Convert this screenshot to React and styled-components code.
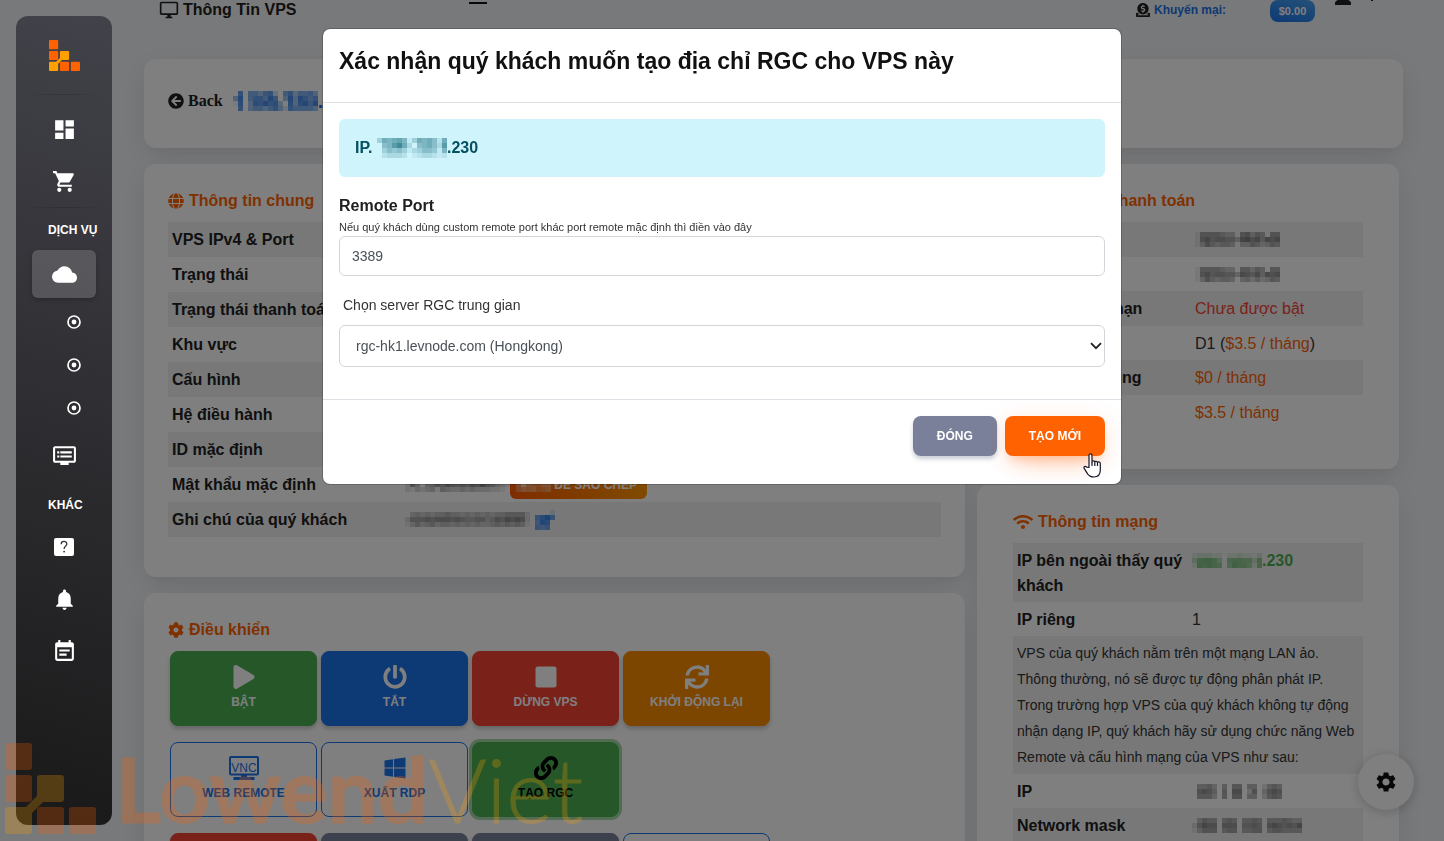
import React from "react";
import styled, { createGlobalStyle, css } from "styled-components";
import {
  MdDashboard,
  MdShoppingCart,
  MdCloud,
  MdDvr,
  MdNotifications,
  MdEventNote,
  MdOutlineDesktopWindows,
  MdPerson,
  MdSettings,
} from "react-icons/md";
import {
  FaArrowCircleLeft,
  FaGlobe,
  FaCog,
  FaWifi,
  FaPlay,
  FaPowerOff,
  FaStop,
  FaSync,
  FaWindows,
  FaLink,
  FaDonate,
  FaCreditCard,
} from "react-icons/fa";

const GlobalStyle = createGlobalStyle`
  *, *::before, *::after { box-sizing: border-box; }
  body {
    margin: 0;
    background: #f0f2f5;
    color: #212121;
    font-family: "Liberation Sans", Arial, sans-serif;
    font-size: 16px;
    line-height: 24px;
    overflow: hidden;
  }
  button, input, select { font-family: inherit; }
  a { color: inherit; text-decoration: none; }
  svg { display: block; flex: none; }
  h1, h2 { margin: 0; }
`;

/* ---------- page frame ---------- */

const Page = styled.div`
  display: grid;
  grid-template-columns: 144px minmax(0, 1fr);
  height: 100vh;
  overflow: hidden;
`;

const Main = styled.main`
  padding-right: 41px;
`;

/* ---------- sidebar ---------- */

const Sidebar = styled.nav`
  position: relative;
  z-index: 20;
  width: 96px;
  height: calc(100vh - 32px);
  margin: 16px 0 0 16px;
  padding-top: 24px;
  border-radius: 12px;
  background: linear-gradient(195deg, #42424a, #191919);
  color: #fff;
  display: flex;
  flex-direction: column;
  align-items: center;
`;

const Brand = styled.a`
  display: block;
  height: 54px;
`;

const Rule = styled.hr`
  width: 80px;
  height: 1px;
  margin: 0;
  border: 0;
  flex: none;
  background: linear-gradient(90deg, transparent, rgba(0, 0, 0, 0.18), transparent);
`;

const NavLink = styled.a`
  display: flex;
  align-items: center;
  justify-content: center;
  width: 64px;
  height: 48px;
  margin: 2px 0;
  border-radius: 6px;
  flex: none;
  ${(p) =>
    p.$active &&
    css`
      background: rgba(255, 255, 255, 0.17);
      box-shadow: 0 2px 4px rgba(0, 0, 0, 0.2);
    `}
`;

const NavGroup = styled.div`
  display: flex;
  flex-direction: column;
  padding: ${(p) => p.$pad || "0"};
`;

const SubLink = styled.a`
  display: flex;
  align-items: center;
  justify-content: flex-end;
  width: 64px;
  height: 43px;
  padding-right: 15px;
`;

const NavHeading = styled.div`
  width: 64px;
  padding-left: 16px;
  font-size: 12px;
  font-weight: 700;
  line-height: 20px;
  white-space: nowrap;
`;

/* ---------- top bar ---------- */

const TopBar = styled.header`
  display: flex;
  align-items: flex-start;
  height: 59px;
  padding: 0 30px 0 15px;
  line-height: 20px;
`;

const PageTitle = styled.h1`
  display: flex;
  gap: 4px;
  font-size: 16px;
  font-weight: 700;
  line-height: 20px;
`;

const Clip = styled.div`
  display: flex;
  align-items: flex-end;
  height: ${(p) => p.$h}px;
  overflow: hidden;
`;

const MenuToggle = styled.button`
  width: 18px;
  height: 4px;
  margin-left: 173px;
  padding: 0;
  border: 0;
  border-bottom: 2px solid #111;
  background: none;
`;

const Account = styled.div`
  display: flex;
  align-items: flex-start;
  margin-left: auto;
`;

const Promo = styled.a`
  display: flex;
  align-items: center;
  gap: 4px;
  margin-right: 44px;
  font-size: 12px;
  font-weight: 700;
  color: #1a73e8;
  svg { color: #212121; }
`;

const Balance = styled.span`
  width: 45px;
  margin-right: 16px;
  border-radius: 8px;
  background: linear-gradient(195deg, #49a3f1, #1a73e8);
  color: #fff;
  font-size: 11px;
  font-weight: 700;
  line-height: 22px;
  text-align: center;
`;

const Tick = styled.span`
  width: 2px;
  height: 1px;
  margin-left: 16px;
  background: #212121;
`;

/* ---------- cards ---------- */

const Card = styled.section`
  border-radius: 12px;
  background: #fff;
  box-shadow: 0 8px 26px -4px rgba(20, 20, 20, 0.12), 0 8px 9px -5px rgba(20, 20, 20, 0.03);
  padding: ${(p) => p.$pad};
`;

const Columns = styled.div`
  display: grid;
  grid-template-columns: minmax(0, 821fr) minmax(0, 422fr);
  gap: 12px;
  align-items: start;
  margin: 16px 4px 0 0;
`;

const Stack = styled.div`
  display: grid;
  gap: 16px;
`;

const BackRow = styled.div`
  display: flex;
  align-items: center;
  height: 36px;
`;

const BackLink = styled.a`
  display: flex;
  align-items: center;
  gap: 4px;
  margin-right: 10px;
  font-family: "Liberation Serif", serif;
  font-weight: 700;
`;

const HostName = styled.span`
  display: flex;
  align-items: center;
  color: #1a73e8;
  font-size: 20px;
  font-weight: 700;
  line-height: 20px;
`;

const CardTitle = styled.h2`
  display: flex;
  align-items: center;
  gap: 5px;
  height: 26px;
  margin-bottom: 8px;
  color: #ff6200;
  font-size: 16px;
  font-weight: 700;
`;

const InfoTable = styled.table`
  width: 100%;
  border-collapse: collapse;
  line-height: 25px;
  th, td {
    height: 35px;
    padding: 5px 4px 4px;
    text-align: left;
    vertical-align: top;
  }
  th { width: ${(p) => p.$label}px; font-weight: 700; }
  td { font-weight: 400; color: #333; }
  tr:nth-child(odd) { background: #f0f0f0; }
  ${(p) =>
    p.$tight &&
    css`
      tr:nth-child(even) th, tr:nth-child(even) td { height: 34px; }
    `}
`;

const Note = styled.td`
  && {
    padding: 4px;
    font-size: 14px;
    line-height: 26px;
  }
`;

const Tone = styled.span`
  color: ${(p) => p.$c};
  font-weight: ${(p) => (p.$bold ? 700 : 400)};
`;

const Inline = styled.div`
  display: flex;
  align-items: center;
  gap: ${(p) => p.$gap || 0}px;
  height: 25px;
`;

const CopyButton = styled.button`
  display: flex;
  align-items: center;
  justify-content: flex-end;
  gap: 3px;
  height: 28px;
  width: 137px;
  padding: 0 10px 0 0;
  border: 0;
  border-radius: 6px;
  background: linear-gradient(80deg, #ff5a00, #ff9800);
  color: #fff;
  font-size: 12px;
  font-weight: 700;
  text-transform: uppercase;
`;

/* ---------- control buttons ---------- */

const Controls = styled.div`
  display: grid;
  grid-template-columns: repeat(4, 147px);
  gap: 16px 4px;
  padding-left: 2px;
`;

const tones = {
  green: css`background: #4caf50; border-color: #4caf50; color: #fff;`,
  blue: css`background: #1a73e8; border-color: #1a73e8; color: #fff;`,
  red: css`background: #f44335; border-color: #f44335; color: #fff;`,
  amber: css`background: #fb8c00; border-color: #fb8c00; color: #fff;`,
  slate: css`background: #7b809a; border-color: #7b809a; color: #fff;`,
  outline: css`background: transparent; border-color: #1a73e8; color: #1a73e8; box-shadow: none;`,
  focus: css`
    background: #4caf50;
    border-color: #4caf50;
    color: #000;
    box-shadow: 0 0 0 3px rgba(76, 175, 80, 0.5);
  `,
};

const ControlButton = styled.button`
  display: flex;
  flex-direction: column;
  align-items: center;
  justify-content: center;
  gap: 4px;
  height: 75px;
  padding: 0 0 2px;
  border: 1px solid;
  border-radius: 8px;
  font-size: 12px;
  font-weight: 700;
  line-height: 18px;
  text-transform: uppercase;
  box-shadow: 0 3px 4px rgba(0, 0, 0, 0.2);
  ${(p) => tones[p.$tone]}
`;

const SettingsButton = styled.button`
  position: fixed;
  right: 30px;
  bottom: 31px;
  display: flex;
  align-items: center;
  justify-content: center;
  width: 56px;
  height: 56px;
  padding: 0;
  border: 0;
  border-radius: 50%;
  background: #fff;
  color: #111;
  box-shadow: 0 2px 12px rgba(0, 0, 0, 0.2);
`;

/* ---------- modal ---------- */

const Backdrop = styled.div`
  position: fixed;
  inset: 0;
  z-index: 10;
  display: flex;
  align-items: flex-start;
  justify-content: center;
  padding-top: 28px;
  background: rgba(0, 0, 0, 0.5);
`;

const Dialog = styled.div`
  position: relative;
  width: 800px;
  max-width: 100%;
  border: 1px solid rgba(0, 0, 0, 0.2);
  border-radius: 8px;
  background: #fff;
  background-clip: padding-box;
`;

const DialogHeader = styled.div`
  padding: 16px 16px 24px;
  border-bottom: 1px solid #dee2e6;
`;

const DialogTitle = styled.h2`
  color: #111;
  font-size: 23px;
  font-weight: 700;
  line-height: 33px;
`;

const DialogBody = styled.div`
  display: flex;
  flex-direction: column;
  padding: 16px 16px 32px;
`;

const Alert = styled.div`
  display: flex;
  align-items: center;
  height: 58px;
  margin-bottom: 16px;
  padding: 0 16px;
  border-radius: 6px;
  background: #cff4fc;
  color: #055160;
  font-weight: 700;
`;

const FieldLabel = styled.label`
  font-weight: 700;
  line-height: 26px;
`;

const Hint = styled.span`
  color: #333;
  font-size: 11px;
  line-height: 16px;
  margin-bottom: 1px;
`;

const SmallLabel = styled.label`
  margin: 16px 0 6px 4px;
  color: #333;
  font-size: 14px;
  line-height: 27px;
`;

const field = css`
  width: 100%;
  border: 1px solid #d2d6da;
  border-radius: 6px;
  background: #fff;
  color: #495057;
  font-size: 14px;
`;

const TextInput = styled.input`
  ${field}
  height: 40px;
  padding: 0 12px;
`;

const SelectWrap = styled.div`
  display: grid;
  align-items: center;
  > * { grid-area: 1 / 1; }
  svg { justify-self: end; margin-right: 3px; pointer-events: none; }
`;

const Select = styled.select`
  ${field}
  height: 42px;
  padding: 0 16px;
  appearance: none;
`;

const DialogFooter = styled.div`
  display: flex;
  justify-content: flex-end;
  gap: 8px;
  padding: 16px 16px 28px;
  border-top: 1px solid #dee2e6;
`;

const ActionButton = styled.button`
  height: 40px;
  padding: 0 24px;
  border: 0;
  border-radius: 8px;
  color: #fff;
  font-size: 12px;
  font-weight: 700;
  text-transform: uppercase;
  background: ${(p) => (p.$primary ? "#ff6200" : "#7b809a")};
  box-shadow: ${(p) =>
    p.$primary
      ? "0 14px 26px -12px rgba(255, 98, 0, 0.4), 0 4px 23px rgba(255, 98, 0, 0.15), 0 8px 10px -5px rgba(255, 98, 0, 0.2)"
      : "0 3px 4px rgba(123, 128, 154, 0.4)"};
`;

const Pointer = styled.svg`
  position: absolute;
  right: 19px;
  bottom: 6px;
`;

/* ---------- watermark ---------- */

const Watermark = styled.div`
  position: fixed;
  left: 5px;
  bottom: 7px;
  z-index: 30;
  display: flex;
  align-items: flex-end;
  gap: 19px;
  opacity: 0.25;
  pointer-events: none;
`;

const Wordmark = styled.span`
  display: flex;
  height: 90px;
  color: #ff6200;
  font-family: Lato, sans-serif;
  font-size: 89px;
  font-weight: 700;
  line-height: 89px;
  -webkit-text-stroke: 1px currentColor;
  span { color: #ffa000; font-weight: 300; }
`;

/* ---------- drawings ---------- */

function Logo({ size }) {
  const sq = (x, y, c) => <rect x={x} y={y} width="27" height="27" rx="3" fill={c} />;
  return (
    <svg width={size} height={size} viewBox="0 0 91 91">
      {sq(0, 0, "#ff6200")}
      {sq(0, 32, "#ff6200")}
      {sq(32, 64, "#ff6200")}
      {sq(64, 64, "#ff6200")}
      <path
        d="M35 32h21q3 0 3 3v21q0 3-3 3H38L27 70v18q0 3-3 3H3q-3 0-3-3V67q0-3 3-3h18L32 53V35q0-3 3-3z"
        fill="#ffa000"
      />
    </svg>
  );
}

function Ring() {
  return (
    <svg width="14" height="14" viewBox="0 0 14 14">
      <circle cx="7" cy="7" r="6" fill="none" stroke="#fff" strokeWidth="1.7" />
      <circle cx="7" cy="7" r="2.4" fill="#fff" />
    </svg>
  );
}

function HelpBox() {
  return (
    <svg width="20" height="18" viewBox="0 0 20 18">
      <rect width="20" height="18" rx="2" fill="#fff" />
      <path d="M7.2 6.2C7.2 2.6 12.8 2.6 12.8 6c0 2-2.7 2.4-2.7 4.9" fill="none" stroke="#333" strokeWidth="1.3" />
      <rect x="9.3" y="12.8" width="1.6" height="1.6" fill="#333" />
    </svg>
  );
}

function VncIcon() {
  return (
    <svg width="30" height="24" viewBox="0 0 30 24" fill="none" stroke="currentColor">
      <rect x="1" y="1" width="28" height="17.500" rx="1" strokeWidth="2" />
      <path d="M12 20h6" strokeWidth="2" />
      <path d="M4.500 22.5h21" strokeWidth="3" />
      <text x="15" y="16" textAnchor="middle" fontSize="12" fill="currentColor" stroke="none" fontWeight="400">
        VNC
      </text>
    </svg>
  );
}

function Caret() {
  return (
    <svg width="12" height="8" viewBox="0 0 12 8">
      <path d="M1 1.2l5 5 5-5" fill="none" stroke="#222" strokeWidth="1.8" />
    </svg>
  );
}

function Hand() {
  return (
    <Pointer width="19" height="25" viewBox="0 0 19 25">
      <path
        d="M6 14.5V2.6C6 .4 9 .4 9 2.6V9c0-1.6 2.8-1.5 2.8.3 0-1.5 2.7-1.3 2.7.5 0-1.4 2.8-1.2 2.8.8V17c0 4.2-2 7-6.500 7-4.200 0-5.400-1.600-7-4.400L1.200 15.400c-1-1.700 1-2.800 2.400-1.300z"
        fill="#fff"
        stroke="#15152a"
        strokeWidth="1.2"
        strokeLinejoin="round"
      />
      <path d="M9 9v4M11.8 9.5V13M14.5 10v3" stroke="#15152a" strokeWidth="1.2" />
    </Pointer>
  );
}

/* Censored text: a mosaic of 5px cells, one hex digit of opacity per cell. */
function Mosaic({ rows, color = "#333" }) {
  const width = rows[0].length * 5;
  const height = rows.length * 5;
  return (
    <svg width={width} height={height} viewBox={`0 0 ${width} ${height}`} shapeRendering="crispEdges" aria-hidden="true">
      {rows.flatMap((row, y) =>
        [...row].map((v, x) => (
          <rect key={`${x}-${y}`} x={x * 5} y={y * 5} width="5" height="5" fill={color} opacity={parseInt(v, 16) / 15} />
        ))
      )}
    </svg>
  );
}

const mosaics = {
  host: ["0a08869a308a58896", "6c08aa8c906c6ca8a", "1b06bacab50b6bc9c", "0a068868a62a88886"],
  alert: ["48789714878628", "067ac83067863a", "04656413466517", "02333201233212"],
  start: ["16666544067465066", "17867766489785878", "14754554044653465"],
  renew: ["16666544066465066", "17867766487685878", "14754554045353465"],
  password: ["263164764646355743211", "274045768767687976431", "213234154334343332210"],
  note: ["0343434454434343434455552", "2666767776765566457687872", "1353453443434343345454541"],
  edit: ["0002", "9bd9", "8cb0", "9890"],
  copy: ["3546354", "5b65466", "4656345"],
  publicIp: ["23332202232213", "59aa9608998849", "2a9a9807a99729"],
  lanIp: ["055640506605502565", "078750608803704787", "066640607705503676"],
  mask: ["0465505650556505556544", "2687707770667607876768", "1466605660556605665555"],
};

/* ---------- page data ---------- */

const generalRows = [
  ["VPS IPv4 & Port", ""],
  ["Trạng thái", ""],
  ["Trạng thái thanh toán", ""],
  ["Khu vực", ""],
  ["Cấu hình", ""],
  ["Hệ điều hành", ""],
  ["ID mặc định", ""],
  [
    "Mật khẩu mặc định",
    <Inline key="p">
      <Mosaic rows={mosaics.password} />
      <CopyButton>
        <Mosaic rows={mosaics.copy} color="#fff" />
        Để sao chép
      </CopyButton>
    </Inline>,
  ],
  [
    "Ghi chú của quý khách",
    <Inline key="n" $gap={5}>
      <Mosaic rows={mosaics.note} />
      <Mosaic rows={mosaics.edit} color="#1a73e8" />
    </Inline>,
  ],
];

const orange = "#ff6200";

const billingRows = [
  ["Ngày tạo", <Inline key="a"><Mosaic rows={mosaics.start} /></Inline>],
  ["Ngày hết hạn", <Inline key="b"><Mosaic rows={mosaics.renew} /></Inline>],
  ["Tự động gia hạn", <Tone key="c" $c="#f44335">Chưa được bật</Tone>],
  ["Gói VPS", <span key="d">D1 (<Tone $c={orange}>$3.5 / tháng</Tone>)</span>],
  ["Dịch vụ bổ sung", <Tone key="e" $c={orange}>$0 / tháng</Tone>],
  ["Tổng cộng", <Tone key="f" $c={orange}>$3.5 / tháng</Tone>],
];

const controls = [
  ["Bật", "green", <FaPlay size={24} />],
  ["Tắt", "blue", <FaPowerOff size={24} />],
  ["Dừng VPS", "red", <FaStop size={24} />],
  ["Khởi động lại", "amber", <FaSync size={24} />],
  ["Web Remote", "outline", <VncIcon />],
  ["Xuất RDP", "outline", <FaWindows size={24} />],
  ["Tạo RGC", "focus", <FaLink size={24} />],
];

const moreControls = [
  ["Hủy VPS", "red"],
  ["Cài lại", "slate"],
  ["Nâng cấp", "slate"],
  ["Gia hạn", "outline"],
];

function Rows({ rows }) {
  return rows.map(([label, value]) => (
    <tr key={label}>
      <th scope="row">{label}</th>
      <td>{value}</td>
    </tr>
  ));
}

export default function App() {
  return (
    <>
      <GlobalStyle />
      <Page>
        <Sidebar>
          <Brand href="#" aria-label="LowendViet">
            <Logo size={31} />
          </Brand>
          <Rule />
          <NavGroup $pad="8px 0 0">
            <NavLink href="#" aria-label="Dashboard"><MdDashboard size={25} /></NavLink>
            <NavLink href="#" aria-label="Cart"><MdShoppingCart size={25} /></NavLink>
          </NavGroup>
          <Rule />
          <NavGroup $pad="12px 0 8px"><NavHeading>DỊCH VỤ</NavHeading></NavGroup>
          <NavLink href="#" aria-label="Cloud" $active><MdCloud size={25} /></NavLink>
          <SubLink href="#" aria-label="VPS"><Ring /></SubLink>
          <SubLink href="#" aria-label="Hosting"><Ring /></SubLink>
          <SubLink href="#" aria-label="Proxy"><Ring /></SubLink>
          <NavLink href="#" aria-label="Servers"><MdDvr size={25} /></NavLink>
          <NavGroup $pad="14px 0 6px"><NavHeading>KHÁC</NavHeading></NavGroup>
          <NavLink href="#" aria-label="Help"><HelpBox /></NavLink>
          <NavLink href="#" aria-label="Notifications"><MdNotifications size={25} /></NavLink>
          <NavLink href="#" aria-label="Events"><MdEventNote size={25} /></NavLink>
        </Sidebar>

        <Main>
          <TopBar>
            <PageTitle>
              <MdOutlineDesktopWindows size={20} />
              Thông Tin VPS
            </PageTitle>
            <MenuToggle aria-label="Menu" />
            <Account>
              <Promo href="#">
                <FaDonate size={14} />
                Khuyến mại:
              </Promo>
              <Balance>$0.00</Balance>
              <Clip $h={9}><MdPerson size={24} /></Clip>
              <Tick />
            </Account>
          </TopBar>

          <Card $pad="24px 24px 29px">
            <BackRow>
              <BackLink href="#">
                <FaArrowCircleLeft size={16} />
                Back
              </BackLink>
              <HostName>
                <Mosaic rows={mosaics.host} color="#1a73e8" />.1.230
              </HostName>
            </BackRow>
          </Card>

          <Columns>
            <Stack>
              <Card $pad="24px 24px 40px">
                <CardTitle><FaGlobe size={16} />Thông tin chung</CardTitle>
                <InfoTable $label={233}>
                  <tbody><Rows rows={generalRows} /></tbody>
                </InfoTable>
              </Card>
              <Card $pad="24px">
                <CardTitle><FaCog size={16} />Điều khiển</CardTitle>
                <Controls>
                  {controls.map(([label, tone, icon]) => (
                    <ControlButton key={label} $tone={tone}>{icon}{label}</ControlButton>
                  ))}
                  <span />
                  {moreControls.map(([label, tone]) => (
                    <ControlButton key={label} $tone={tone} aria-label={label} />
                  ))}
                </Controls>
              </Card>
            </Stack>

            <Stack>
              <Card $pad="24px 36px 40px">
                <CardTitle><FaCreditCard size={18} />Thông tin thanh toán</CardTitle>
                <InfoTable $label={178} $tight>
                  <tbody><Rows rows={billingRows} /></tbody>
                </InfoTable>
              </Card>
              <Card $pad="24px 36px">
                <CardTitle><FaWifi size={20} />Thông tin mạng</CardTitle>
                <InfoTable $label={175} $tight>
                  <tbody>
                    <tr>
                      <th scope="row">IP bên ngoài thấy quý khách</th>
                      <td>
                        <Inline>
                          <Mosaic rows={mosaics.publicIp} color="#4caf50" />
                          <Tone $c="#4caf50" $bold>.230</Tone>
                        </Inline>
                      </td>
                    </tr>
                    <tr><th scope="row">IP riêng</th><td>1</td></tr>
                    <tr>
                      <Note colSpan={2}>
                        VPS của quý khách nằm trên một mạng LAN ảo. Thông thường, nó sẽ được tự động phân phát IP.
                        <br />
                        Trong trường hợp VPS của quý khách không tự động nhận dạng IP, quý khách hãy sử dụng chức năng
                        Web Remote và cấu hình mạng của VPS như sau:
                      </Note>
                    </tr>
                    <tr><th scope="row">IP</th><td><Inline><Mosaic rows={mosaics.lanIp} /></Inline></td></tr>
                    <tr><th scope="row">Network mask</th><td><Inline><Mosaic rows={mosaics.mask} /></Inline></td></tr>
                  </tbody>
                </InfoTable>
              </Card>
            </Stack>
          </Columns>
        </Main>
      </Page>

      <SettingsButton aria-label="Settings"><MdSettings size={24} /></SettingsButton>

      <Backdrop>
        <Dialog role="dialog" aria-modal="true" aria-labelledby="rgc-title">
          <DialogHeader>
            <DialogTitle id="rgc-title">Xác nhận quý khách muốn tạo địa chỉ RGC cho VPS này</DialogTitle>
          </DialogHeader>
          <DialogBody>
            <Alert>
              IP.&nbsp;
              <Mosaic rows={mosaics.alert} color="#1c6f80" />
              .230
            </Alert>
            <FieldLabel htmlFor="port">Remote Port</FieldLabel>
            <Hint>Nếu quý khách dùng custom remote port khác port remote mặc định thì điền vào đây</Hint>
            <TextInput id="port" defaultValue="3389" />
            <SmallLabel htmlFor="server">Chọn server RGC trung gian</SmallLabel>
            <SelectWrap>
              <Select id="server">
                <option>rgc-hk1.levnode.com (Hongkong)</option>
              </Select>
              <Caret />
            </SelectWrap>
          </DialogBody>
          <DialogFooter>
            <ActionButton>Đóng</ActionButton>
            <ActionButton $primary>Tạo mới</ActionButton>
          </DialogFooter>
          <Hand />
        </Dialog>
      </Backdrop>

      <Watermark>
        <Logo size={91} />
        <Wordmark>Lowend<span>Viet</span></Wordmark>
      </Watermark>
    </>
  );
}
